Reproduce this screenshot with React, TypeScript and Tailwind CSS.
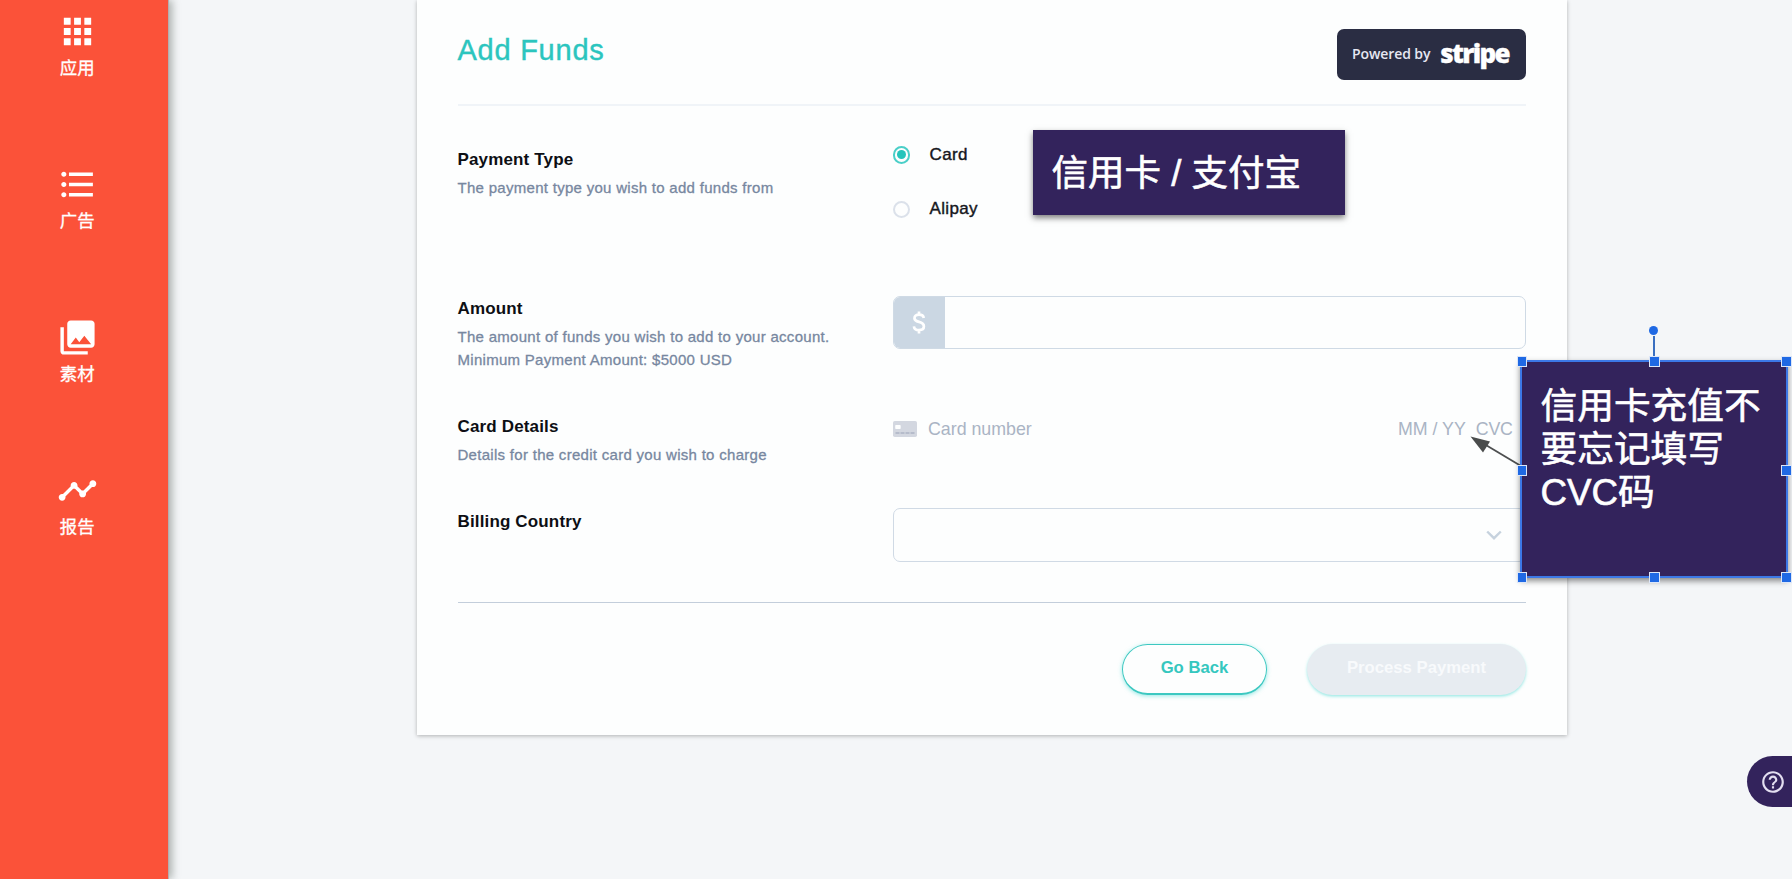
import type { ReactNode } from "react";
import {
  MdApps,
  MdFormatListBulleted,
  MdPhotoLibrary,
  MdTimeline,
  MdHelpOutline,
} from "react-icons/md";

const NAV = [
  { label: "应用", Icon: MdApps },
  { label: "广告", Icon: MdFormatListBulleted },
  { label: "素材", Icon: MdPhotoLibrary },
  { label: "报告", Icon: MdTimeline },
];

const HANDLES = [
  "left-[-5.5px] top-[-6px]",
  "left-[127px] top-[-6px]",
  "left-[259px] top-[-6px]",
  "left-[-5.5px] top-[103px]",
  "left-[259px] top-[103px]",
  "left-[-5.5px] top-[210px]",
  "left-[127px] top-[210px]",
  "left-[259px] top-[210px]",
];

function Sidebar() {
  return (
    <aside className="z-10 flex w-[168.5px] shrink-0 flex-col border-r border-[#b3aeb0] bg-[#fb5239] pt-[10.5px] pr-[13px] shadow-[3px_0_8px_rgba(60,70,60,0.4)]">
      {NAV.map(({ label, Icon }) => (
        <div key={label} className="flex h-[153.2px] shrink-0 flex-col items-center text-white">
          <Icon size={41} />
          <span className="mt-[6px] text-[17.4px] leading-[20px] [-webkit-text-stroke:0.3px_white]">{label}</span>
        </div>
      ))}
    </aside>
  );
}

function Row({
  title,
  lines,
  className,
  children,
}: {
  title: string;
  lines: string[];
  className: string;
  children?: ReactNode;
}) {
  return (
    <div className={`flex ${className}`}>
      <div className="w-[435px] shrink-0">
        <h2 className="text-[17px] leading-[24px] font-bold tracking-[0.15px] text-[#0d0f14]">{title}</h2>
        <div className="mt-[5px] text-[15px] leading-[22.7px] tracking-[0.29px] whitespace-nowrap text-[#7787a0] [-webkit-text-stroke:0.3px_#7787a0]">
          {lines.map((l) => (
            <p key={l}>{l}</p>
          ))}
        </div>
      </div>
      <div className="min-w-0 flex-1">{children}</div>
    </div>
  );
}

function Radio({ label, checked }: { label: string; checked?: boolean }) {
  return (
    <label className="flex h-[54.5px] items-center">
      <span
        className={`flex size-[17.5px] items-center justify-center rounded-full border-2 ${
          checked ? "border-[#4acfc8]" : "border-[#dbe1ea]"
        }`}
      >
        {checked && <span className="size-[9px] rounded-full bg-[#24c4bb]" />}
      </span>
      <span className="ml-[19.5px] text-[17px] leading-[24px] tracking-[0.35px] text-[#15171c] [-webkit-text-stroke:0.4px_#15171c]">
        {label}
      </span>
    </label>
  );
}

export default function App() {
  return (
    <div className="relative flex h-[879px] w-[1792px] overflow-hidden bg-[#f4f6f8] font-['Liberation_Sans','Noto_Sans_CJK_SC',sans-serif]">
      <Sidebar />

      <main className="ml-[248.5px] h-[735px] w-[1149.5px] bg-[#fdfefe] px-[40.5px] shadow-[0_1px_4px_rgba(0,0,0,0.28)]">
        <header className="flex h-[106px] items-start justify-between border-b-2 border-[#f0f4f8]">
          <h1 className="mt-[32px] text-[29px] leading-[36px] tracking-[0.75px] text-[#2bc5be] [-webkit-text-stroke:0.4px_#2bc5be]">
            Add Funds
          </h1>
          <div className="mt-[28.5px] flex h-[51.5px] w-[189px] items-center rounded-[7px] bg-[#2a2d43] pl-[15px] whitespace-nowrap text-white">
            <span className="font-['Open_Sans',sans-serif] text-[14px] leading-[20px] font-semibold tracking-[-0.1px] text-[#e6e7f2]">
              Powered by
            </span>
            <span className="mt-[-3px] ml-[10px] font-['Open_Sans',sans-serif] text-[26px] leading-[30px] font-extrabold tracking-[-1.7px] [-webkit-text-stroke:0.3px_white]">
              stripe
            </span>
          </div>
        </header>

        <Row
          title="Payment Type"
          lines={["The payment type you wish to add funds from"]}
          className="h-[190px] pt-[41.5px]"
        >
          <div className="-mt-[20px]">
            <Radio label="Card" checked />
            <Radio label="Alipay" />
          </div>
        </Row>

        <Row
          title="Amount"
          lines={[
            "The amount of funds you wish to add to your account.",
            "Minimum Payment Amount: $5000 USD",
          ]}
          className="h-[118px] pt-[1px]"
        >
          <div className="-mt-[1px] flex h-[53px] overflow-hidden rounded-[7px] border-[1.5px] border-[#cfdae5]">
            <div className="flex w-[51px] items-center justify-center bg-[#cbd7e3] text-white">
              <svg width="14" height="25" viewBox="0 0 14 26" fill="none" stroke="currentColor" strokeWidth="2.8">
                <path d="M12 8.3C11.600 5.900 9.700 4.800 7 4.800C4.200 4.800 2.300 6.100 2.300 8.500C2.300 13.900 12.100 10.800 12.100 17C12.100 19.500 10 21 7 21C4 21 2 19.600 1.700 17M7 1.500V4.800M7 21V24.500" />
              </svg>
            </div>
          </div>
        </Row>

        <Row title="Card Details" lines={["Details for the credit card you wish to charge"]} className="h-[94px] pt-[0.5px]">
          <div className="flex h-[28px] items-center text-[17.8px] leading-[24px] text-[#aab4c4]">
            <svg className="shrink-0" width="24" height="16" viewBox="0 0 24 16">
              <rect width="24" height="16" rx="1.8" fill="#d3d7e0" />
              <rect x="2.200" y="4" width="5.500" height="4" rx="0.8" fill="#fdfefe" />
              <path d="M2.500 12H21.500" stroke="#adb4c3" strokeWidth="1.400" strokeDasharray="4 1" />
            </svg>
            <span className="ml-[11.5px] flex-1">Card number</span>
            <span>MM / YY</span>
            <span className="mr-[13.5px] ml-[10px] tracking-[-0.3px]">CVC</span>
          </div>
        </Row>

        <Row title="Billing Country" lines={[]} className="h-[94px] pt-[2px]">
          <div className="-mt-[2px] flex h-[53.5px] items-center justify-end rounded-[7px] border-[1.5px] border-[#d0dae5] pt-[1px] pr-[23px]">
            <svg width="16" height="10" viewBox="0 0 16 10" fill="none" stroke="#c6d2de" strokeWidth="2.400">
              <path d="M1.200 1.500L8 8.200L14.800 1.500" />
            </svg>
          </div>
        </Row>

        <footer className="flex justify-end gap-[40px] border-t border-[#c3cedb] pt-[40.5px] text-[16.7px] font-bold">
          <button className="h-[51px] w-[145px] rounded-full border-[1.5px] border-b-2 border-[#3cc8c1] pb-[2px] text-[#35c7bf] shadow-[0_1px_4px_rgba(60,215,207,0.55)]">
            Go Back
          </button>
          <button className="h-[51px] w-[219px] rounded-full bg-[#e7ecf1] pb-[2px] text-[#f8fafc] shadow-[0_1.5px_3px_rgba(60,215,207,0.5)]">
            Process Payment
          </button>
        </footer>
      </main>

      <div className="absolute top-[130px] left-[1033px] flex h-[85px] w-[312px] items-center bg-[#33235c] pt-[2px] pl-[18.500px] text-[36.500px] leading-[44px] whitespace-nowrap text-white shadow-[0_3px_6px_rgba(0,0,0,0.5)] [-webkit-text-stroke:0.6px_white]">
        信用卡 / 支付宝
      </div>

      <svg className="absolute top-[430px] left-[1465px]" width="60" height="42" viewBox="0 0 60 42">
        <path d="M20 14.500L56 36" stroke="#4d4f50" strokeWidth="1.800" />
        <path d="M5.500 6.500L25 11.500L18 22.500Z" fill="#4a4c4c" />
      </svg>

      <div className="absolute top-[360px] left-[1520px] h-[218px] w-[267.5px] border-2 border-[#3c78e6] bg-[#33235c] pt-[22.500px] pl-[18.500px] text-[36.700px] leading-[43.300px] whitespace-nowrap text-white shadow-[0_3px_6px_rgba(0,0,0,0.45)] [-webkit-text-stroke:0.6px_white]">
        <p>信用卡充值不</p>
        <p>要忘记填写</p>
        <p>CVC码</p>
        <span className="absolute top-[-26px] left-[131px] h-[20px] w-[1.5px] bg-[#3a6fc0]" />
        <span className="absolute top-[-36px] left-[127px] size-[9px] rounded-full bg-[#1f69e4]" />
        {HANDLES.map((pos) => (
          <span key={pos} className={`absolute size-[10.5px] border border-[#dce6f8] bg-[#1f69e4] ${pos}`} />
        ))}
      </div>

      <button className="absolute top-[756px] left-[1747px] flex h-[51px] w-[70px] items-center rounded-full bg-[#33235c] pl-[13px] text-[#e3def0]">
        <MdHelpOutline size={26} />
      </button>
    </div>
  );
}
